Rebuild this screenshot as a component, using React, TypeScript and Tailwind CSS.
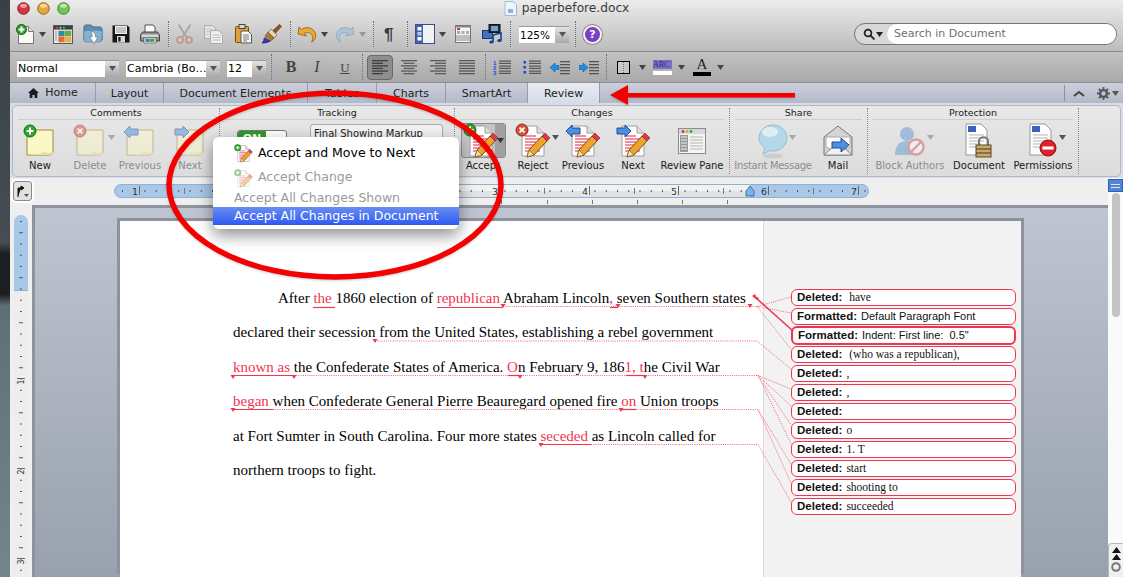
import type { ReactNode } from "react";

const RED = "#f0364f";

function Caret({ color = "#444" }: { color?: string }) {
  return (
    <svg width="7" height="5" viewBox="0 0 7 5" className="shrink-0">
      <path d="M0 0h7L3.5 5z" fill={color} />
    </svg>
  );
}

function Sep({ h = "h-[26px]" }: { h?: string }) {
  return <div className={`border-l border-dotted border-[#6f6f6f] ${h} shrink-0`} />;
}

function Light({ color, edge }: { color: string; edge: string }) {
  return (
    <svg width="13" height="13" viewBox="0 0 13 13">
      <circle cx="6.5" cy="6.5" r="5.8" fill={color} stroke={edge} />
      <ellipse cx="6.5" cy="3.8" rx="3.4" ry="2" fill="#fff" opacity="0.55" />
    </svg>
  );
}

function NewDocIcon() {
  return (
    <svg width="18" height="20" viewBox="0 0 18 20">
      <path d="M2.5 2.5h10l5 5v12h-15z" fill="#fbfbf4" stroke="#77776c" />
      <path d="M12.5 2.5v5h5" fill="#e4e4da" stroke="#77776c" />
      <circle cx="5.5" cy="5.5" r="5" fill="#2f9e2f" stroke="#0d5f0d" />
      <path d="M5.5 2.6v5.8M2.6 5.5h5.8" stroke="#fff" strokeWidth="2" />
    </svg>
  );
}

function GalleryIcon() {
  return (
    <svg width="20" height="19" viewBox="0 0 20 19">
      <rect x="0.5" y="0.5" width="19" height="18" fill="#dcd8cc" stroke="#55595f" />
      <rect x="1" y="1" width="18" height="3.5" fill="#3c4046" />
      <circle cx="4" cy="2.7" r="1" fill="#e44" />
      <circle cx="7.5" cy="2.7" r="1" fill="#ec4" />
      <circle cx="11" cy="2.7" r="1" fill="#4c4" />
      <rect x="1.5" y="5.5" width="3" height="12" fill="#fff" />
      <path d="M2 7h2M2 9h2M2 11h2M2 13h2M2 15h2" stroke="#777" />
      <rect x="5.5" y="6" width="6" height="5" fill="#2d8ea0" />
      <rect x="12" y="6" width="6" height="5" fill="#5fae4a" />
      <rect x="5.5" y="11.5" width="6" height="5.5" fill="#e86a30" />
      <rect x="12" y="11.5" width="6" height="5.5" fill="#eeb040" />
    </svg>
  );
}

function FolderIcon() {
  return (
    <svg width="20" height="20" viewBox="0 0 20 20">
      <path d="M1 3c0-1 1-2 2-2h5l2 2h7c1 0 2 1 2 2v11H1z" fill="#5d8fb0" stroke="#3f6c8c" />
      <path d="M.5 7c5-1 14-1 19 0l-1 10c-1 1-3 1-4 1H3c-1 0-2-1-2-1z" fill="#86b2d0" stroke="#4f7fa0" strokeWidth="0.6" />
      <path d="M8.5 7c3 1 4 3 4 6h2.5L11 19.5 6.5 13h2.6c0-2-.2-4-.6-6z" fill="#fff" stroke="#5a6a78" strokeWidth="0.6" />
    </svg>
  );
}

function SaveIcon() {
  return (
    <svg width="18" height="18" viewBox="0 0 18 18">
      <path d="M.5.5h15l2 2v15H.5z" fill="#161616" />
      <rect x="3" y="1" width="12" height="8" fill="#f0f0f0" />
      <path d="M4 3h10M4 5h10M4 7h10" stroke="#9a9a9a" />
      <rect x="5" y="11" width="8" height="6.5" fill="#d8d8d8" />
      <rect x="6.2" y="12" width="2.4" height="4.5" fill="#222" />
    </svg>
  );
}

function PrintIcon() {
  return (
    <svg width="20" height="20" viewBox="0 0 20 20">
      <path d="M5 1h8l2 2v6H5z" fill="#fafafa" stroke="#555" />
      <path d="M2.5 8h15l2 3v6H.5v-6z" fill="#8e8e8e" stroke="#454545" />
      <rect x="1.5" y="10.5" width="17" height="2.5" fill="#d6d6d6" />
      <path d="M4 14h12v5H4z" fill="#fff" stroke="#555" strokeWidth="0.7" />
      <rect x="5.5" y="15" width="4" height="3" fill="#2f7fc4" />
      <rect x="9.5" y="15" width="5" height="3" fill="#3fa85a" />
    </svg>
  );
}

function ScissorsIcon() {
  return (
    <svg width="17" height="20" viewBox="0 0 17 20" fill="none">
      <path d="M2.5 .5l8.5 13.5M14.5 .5L6 14" stroke="#a6a6a6" strokeWidth="1.8" />
      <circle cx="4" cy="16" r="3" stroke="#c98f82" strokeWidth="1.6" />
      <circle cx="13" cy="16" r="3" stroke="#c98f82" strokeWidth="1.6" />
    </svg>
  );
}

function CopyIcon() {
  return (
    <svg width="19" height="19" viewBox="0 0 19 19">
      <path d="M.5.5h8l3 3v10H.5z" fill="#e4e4e4" stroke="#ababab" />
      <path d="M2.5 4h6M2.5 6.5h6M2.5 9h3" stroke="#c4c4c4" />
      <path d="M6.5 5.5h8l4 4v9h-12z" fill="#efefef" stroke="#ababab" />
      <path d="M8.5 10h8M8.5 12.5h8M8.5 15h8" stroke="#bdbdbd" />
    </svg>
  );
}

function PasteIcon() {
  return (
    <svg width="17" height="20" viewBox="0 0 17 20">
      <rect x="0.5" y="2.5" width="13" height="16" rx="1" fill="#e0a03a" stroke="#6a4c14" />
      <rect x="4" y="0.5" width="6" height="4" fill="#d8d8d8" stroke="#444" />
      <path d="M6 7h7l3.5 3.5V19H6z" fill="#fafafa" stroke="#555" />
      <path d="M8 11h6M8 13h6M8 15h6M8 17h4" stroke="#777" />
    </svg>
  );
}

function BrushIcon() {
  return (
    <svg width="20" height="20" viewBox="0 0 20 20">
      <path d="M11 6.5L17.5 .5 19.5 2.5 13.5 9z" fill="#8a5a20" stroke="#3e2810" strokeWidth="0.6" />
      <path d="M9 5l6 6-3 3-6-6z" fill="#e2d6ac" stroke="#6a5a30" strokeWidth="0.6" />
      <path d="M6 8l6 6c-2 3-7 5-12 5 3-2 4-4 3-7z" fill="#a97a3a" stroke="#5a3e14" strokeWidth="0.5" />
      <path d="M2 14l6 3c-3 2-5 2-8 2 1-1 2-3 2-5z" fill="#3f2fd8" stroke="#201070" strokeWidth="0.5" />
    </svg>
  );
}

function UndoIcon({ faded }: { faded?: boolean }) {
  const c = faded ? "#aec4d6" : "#eeaa2c";
  const s = faded ? "#8ba3b8" : "#8a5a10";
  return (
    <svg width="20" height="17" viewBox="0 0 20 17" className={faded ? "-scale-x-100" : ""}>
      <path d="M1 8l1-7 2.5 2.5C7 1.500 11 1 14 2.500c4 2 5.500 6 4.500 9-.5 2-2 3.500-4 4.500 1.500-2 1.800-5 .5-7-1.500-2.500-5-3-8-1.500L9.500 10z" fill={c} stroke={s} strokeWidth="0.8" />
    </svg>
  );
}

function LayoutIcon() {
  return (
    <svg width="20" height="20" viewBox="0 0 20 20">
      <rect x="0.5" y="0.5" width="19" height="19" fill="#f2f2f2" stroke="#3b4f8c" />
      <rect x="1" y="1" width="7" height="18" fill="#3f62a8" />
      <rect x="2.500" y="3" width="4" height="3.500" fill="#fff" />
      <rect x="2.500" y="8" width="4" height="3.500" fill="#b8c8e8" />
      <rect x="2.500" y="13" width="4" height="3.500" fill="#fff" />
    </svg>
  );
}

function PageViewIcon() {
  return (
    <svg width="16" height="18" viewBox="0 0 16 18">
      <rect x="0.5" y="0.5" width="15" height="17" fill="#f5f5f5" stroke="#777" />
      <rect x="1" y="1" width="14" height="1.500" fill="#888" />
      <rect x="2" y="3" width="3" height="2" fill="#c83a30" />
      <rect x="2" y="6" width="3" height="3" fill="#aab" />
      <rect x="6.500" y="6" width="3" height="3" fill="#aab" />
      <rect x="11" y="6" width="3" height="3" fill="#aab" />
      <path d="M1 11h14M1 13h14M1 15h14" stroke="#888" />
    </svg>
  );
}

function MediaIcon() {
  return (
    <svg width="21" height="20" viewBox="0 0 21 20">
      <rect x="0.5" y="6.500" width="10" height="8" fill="#3f74c4" stroke="#183868" />
      <rect x="7" y="0.5" width="11" height="8" fill="#2b2b2b" stroke="#111" />
      <rect x="9" y="2" width="7" height="5" fill="#6fa0d8" />
      <path d="M11 18V11l8-2v7" fill="none" stroke="#16408c" strokeWidth="1.6" />
      <ellipse cx="9.500" cy="18" rx="2.200" ry="1.600" fill="#16408c" />
      <ellipse cx="17.500" cy="16.500" rx="2.200" ry="1.600" fill="#16408c" />
    </svg>
  );
}

function HelpIcon() {
  return (
    <div className="w-[19px] h-[19px] rounded-full bg-[#7a3fc4] border-2 border-[#f2f2f2] shadow-[0_0_0_1px_#8a8a8a] flex items-center justify-center text-white text-[11px] font-bold leading-none">
      ?
    </div>
  );
}

function SelectBox({ w, label, btn = "w-[14px]", size = "text-[11px]" }: { w: string; label: string; btn?: string; size?: string }) {
  return (
    <div className={`${w} h-[17px] flex bg-white shrink-0 border-t border-[#9a9a9a]`}>
      <div className={`flex-1 px-[1px] ${size} leading-[16px] text-black whitespace-nowrap overflow-hidden`}>{label}</div>
      <div className={`${btn} bg-gradient-to-b from-[#e4e4e4] to-[#a8a8a8] flex items-center justify-center`}>
        <Caret color="#555" />
      </div>
    </div>
  );
}

function AlignIcon({ kind }: { kind: "left" | "center" | "right" | "justify" }) {
  const rows = [16, 11, 16, 11, 16, 11];
  return (
    <svg width="16" height="15" viewBox="0 0 16 15">
      {rows.map((r, i) => {
        const w = kind === "justify" ? 16 : r;
        const x = kind === "left" || kind === "justify" ? 0 : kind === "right" ? 16 - w : (16 - w) / 2;
        return <rect key={i} x={x} y={i * 2.6} width={w} height="1.3" fill={kind === "left" ? "#3e3e3e" : "#5a5a5a"} />;
      })}
    </svg>
  );
}

function ListIcon({ numbered }: { numbered?: boolean }) {
  return (
    <svg width="18" height="15" viewBox="0 0 18 15">
      {[0, 5, 10].map((y, i) => (
        <g key={y}>
          {numbered ? (
            <text x="0" y={y + 5} fontSize="6" fontWeight="bold" fill="#1848e0" fontFamily="Liberation Sans, sans-serif">
              {i + 1}
            </text>
          ) : (
            <rect x="0.5" y={y + 1} width="2.500" height="2.500" fill="#1848e0" />
          )}
          <rect x="6" y={y + 0.5} width="12" height="1.200" fill="#555" />
          <rect x="6" y={y + 2.800} width="12" height="1.200" fill="#555" />
        </g>
      ))}
    </svg>
  );
}

function IndentIcon({ flip }: { flip?: boolean }) {
  return (
    <svg width="20" height="15" viewBox="0 0 20 15">
      <path
        d={flip ? "M0 7.5L5 3v2.500h4v4H5V12z" : "M9 7.5L4 3v2.500H0v4h4V12z"}
        fill="#1e8ee8"
        stroke="#0a4a90"
        strokeWidth="0.5"
      />
      {[1, 4, 7, 10, 13].map((y) => (
        <rect key={y} x="10" y={y} width="10" height="1.3" fill="#555" />
      ))}
    </svg>
  );
}

function HomeGlyph() {
  return (
    <svg width="11" height="10" viewBox="0 0 11 10" className="shrink-0">
      <path d="M5.500 0L11 5H9.300v5H6.600V7H4.400v3H1.700V5H0z" fill="#1c1c1c" />
    </svg>
  );
}

function GearGlyph() {
  return (
    <svg width="13" height="13" viewBox="0 0 13 13">
      <circle cx="6.500" cy="6.500" r="3.400" fill="none" stroke="#555" strokeWidth="2.400" />
      <path d="M6.500 0v2.500M6.500 10.500V13M0 6.500h2.500M10.500 6.500H13M1.900 1.900l1.800 1.800M9.300 9.300l1.800 1.800M1.900 11.100l1.800-1.800M9.300 3.700l1.800-1.800" stroke="#555" strokeWidth="1.800" />
    </svg>
  );
}

type Badge = "plus" | "x" | "left" | "right";

function BadgeMark({ kind }: { kind: Badge }) {
  if (kind === "plus" || kind === "x") {
    const fill = kind === "plus" ? "#2fa82f" : "#d9513a";
    const edge = kind === "plus" ? "#0f6a0f" : "#8c2a18";
    return (
      <g>
        <circle cx="7" cy="7" r="6" fill={fill} stroke={edge} />
        {kind === "plus" ? (
          <path d="M7 3.600v6.800M3.600 7h6.800" stroke="#fff" strokeWidth="2" />
        ) : (
          <path d="M4.600 4.600l4.800 4.800M9.400 4.600l-4.800 4.800" stroke="#fff" strokeWidth="1.800" />
        )}
      </g>
    );
  }
  return kind === "left" ? (
    <path d="M1 8l6-6v3h8v6H7v3z" fill="#4d8fe0" stroke="#1d4f94" />
  ) : (
    <path d="M16 8l-6-6v3H2v6h8v3z" fill="#4d8fe0" stroke="#1d4f94" />
  );
}

function StickyIcon({ badge, faded }: { badge: Badge; faded?: boolean }) {
  return (
    <svg width="34" height="34" viewBox="0 0 34 34" className={faded ? "opacity-50" : ""}>
      <path d="M4 6h26v22c0 1-2 3-4 3H4z" fill="#fbf8c8" stroke="#9c8a3c" />
      <path d="M4 31h22c2 0 4-2 4-3-3 1-6 1-9 0-4 2-12 2-17 3z" fill="#e8e0a0" />
      <BadgeMark kind={badge} />
    </svg>
  );
}

function ReviewIcon({ badge, size = 36 }: { badge?: Badge; size?: number }) {
  return (
    <svg width={size} height={size} viewBox="0 0 36 36">
      <path d="M7 3h15l7 7v23H7z" fill="#fdfdfd" stroke="#a0a0a0" />
      <path d="M22 3v7h7" fill="#dcdcdc" stroke="#a0a0a0" />
      {[13, 16, 19, 22, 25, 28].map((y) => (
        <path key={y} d={`M10 ${y}h${y % 2 ? 11 : 15}`} stroke="#e8546a" strokeWidth="1.3" />
      ))}
      <path d="M12 34l2-7 13-14 5 5-13 14z" fill="#eda32e" stroke="#7a5010" />
      <path d="M12 34l2-7 5 5z" fill="#f3dcb0" stroke="#7a5010" strokeWidth="0.6" />
      <path d="M27 13l3-3 5 5-3 3z" fill="#d93a4c" stroke="#80202c" strokeWidth="0.6" />
      {badge ? <BadgeMark kind={badge} /> : null}
    </svg>
  );
}

function ReviewPaneIcon() {
  return (
    <svg width="28" height="30" viewBox="0 0 28 30">
      <rect x="0.5" y="2.500" width="27" height="25" fill="#f4f4f0" stroke="#8c8c8c" />
      <rect x="1" y="3" width="26" height="5" fill="#d8d8d8" />
      <circle cx="5" cy="5.500" r="1.400" fill="#d33" />
      <circle cx="9" cy="5.500" r="1.400" fill="#da3" />
      <circle cx="13" cy="5.500" r="1.400" fill="#3a3" />
      <rect x="2" y="9" width="8" height="17" fill="#9a9a9a" />
      {[11, 14, 17, 20, 23].map((y) => (
        <g key={y}>
          <path d={`M3 ${y}h6`} stroke="#eee" />
          <path d={`M12 ${y}h13`} stroke="#b5b5b5" />
        </g>
      ))}
    </svg>
  );
}

function BubbleIcon() {
  return (
    <svg width="30" height="36" viewBox="0 0 30 36" className="opacity-80">
      <ellipse cx="15" cy="33" rx="10" ry="2.500" fill="#c8c8c8" />
      <path d="M15 2c8 0 14 6 14 13s-6 13-14 13c-2 0-3 0-4 0l-6 3 2-6C3 22 1 19 1 15 1 8 7 2 15 2z" fill="#a9d5ec" stroke="#7db4d0" />
      <ellipse cx="12" cy="9" rx="8" ry="5" fill="#dff1fa" />
    </svg>
  );
}

function MailIcon() {
  return (
    <svg width="30" height="32" viewBox="0 0 30 32">
      <path d="M1 12L15 1l14 11v18H1z" fill="#d4d4d4" stroke="#777" />
      <path d="M3 12h24v10L15 27 3 22z" fill="#fdfdfd" stroke="#aaa" />
      <path d="M1 30l11-10h6l11 10z" fill="#f2f2f2" stroke="#888" />
      <path d="M9 17h9v-4l8 7-8 7v-4H9z" fill="#4d8fe0" stroke="#1d4f94" />
    </svg>
  );
}

function BlockIcon() {
  return (
    <svg width="32" height="32" viewBox="0 0 32 32" className="opacity-65">
      <circle cx="13" cy="9" r="7" fill="#7fa8d4" />
      <path d="M1 30c0-10 5-14 12-14s12 4 12 14z" fill="#7fa8d4" />
      <circle cx="22" cy="22" r="7.500" fill="#f5f5f5" stroke="#d67b7b" strokeWidth="2.400" />
      <path d="M17 27l10-10" stroke="#d67b7b" strokeWidth="2.400" />
    </svg>
  );
}

function ProtectedDoc({ lock }: { lock?: boolean }) {
  return (
    <svg width="30" height="36" viewBox="0 0 30 36">
      <path d="M2 1h15l6 6v25H2z" fill="#fdfdfd" stroke="#999" />
      <rect x="4" y="3" width="8" height="6" fill="#3f5fc0" />
      <path d="M5 12h15M5 15h15M5 18h15M5 21h12M5 24h12" stroke="#b5b5b5" />
      {lock ? (
        <g>
          <path d="M15 22v-4c0-5 9-5 9 0v4" fill="none" stroke="#777" strokeWidth="2" />
          <rect x="12" y="22" width="15" height="12" fill="#c9a86a" stroke="#5a4a2a" />
          <path d="M12 26h15M12 30h15" stroke="#4a3a20" />
        </g>
      ) : (
        <g>
          <circle cx="20" cy="25" r="8" fill="#e0202c" stroke="#8c1018" />
          <rect x="14.500" y="23.500" width="11" height="3" fill="#fff" />
        </g>
      )}
    </svg>
  );
}

function RibbonBtn({ w, label, dim, children, caret, tight }: { w: string; label: string; dim?: boolean; children: ReactNode; caret?: boolean; tight?: boolean }) {
  return (
    <div className={`${w} flex flex-col items-center shrink-0`}>
      <div className="h-[37px] flex items-center justify-center relative">
        {children}
        {caret ? (
          <div className="absolute -right-[8px] top-[13px]">
            <Caret color={dim ? "#a8a8a8" : "#555"} />
          </div>
        ) : null}
      </div>
      <div className={`text-[10px] leading-[14px] whitespace-nowrap ${tight ? "tracking-[-0.3px]" : ""} ${dim ? "text-[#8c8c8c]" : "text-[#1a1a1a]"}`}>{label}</div>
    </div>
  );
}

function Section({ w, title, pad, children }: { w: string; title: string; pad: string; children: ReactNode }) {
  return (
    <div className={`${w} shrink-0 flex flex-col border-r border-dotted border-[#8a8a8a] my-[2px]`}>
      <div className="mx-[5px] h-[12px] border-b border-[#cfcfcf] text-center text-[9.5px] leading-[10px] text-[#222]">{title}</div>
      <div className={`flex ${pad} pt-[2px]`}>{children}</div>
    </div>
  );
}

function Ruler() {
  const xs: number[] = [];
  for (let x = 122; x < 866; x += 11.25) xs.push(x);
  const labels = [
    [139, "1"],
    [499, "3"],
    [589, "4"],
    [678, "5"],
    [768, "6"],
    [858, "7"],
  ] as const;
  return (
    <svg width="760" height="22" viewBox="112 182 760 22" className="ml-[102px] mt-[4px] block">
      <rect x="114.500" y="184.500" width="754" height="13" rx="6.500" fill="#a9c7e6" stroke="#8fb0d2" />
      <rect x="232" y="185" width="518" height="12" fill="#f2f2f2" />
      <rect x="232" y="191" width="518" height="6" fill="#e2e2e2" />
      {xs.map((x) => (
        <rect key={x} x={x} y={190} width="1" height="2" fill="#555" />
      ))}
      {[184, 274, 364, 454, 544, 634, 723, 813].map((x) => (
        <rect key={x} x={x} y={188} width="1" height="6" fill="#777" />
      ))}
      {labels.map(([x, t]) => (
        <g key={x}>
          <rect x={x} y={186} width="1" height="9" fill="#666" />
          <text x={x - 1} y={195} fontSize="9.5" textAnchor="end" fill="#333" fontFamily="DejaVu Sans, sans-serif" stroke={x > 750 || x < 232 ? "#a9c7e6" : "#eeeeee"} strokeWidth="2.500" paintOrder="stroke">
            {t}
          </text>
        </g>
      ))}
      {[501, 547, 592, 637, 682, 727].map((x) => (
        <rect key={x} x={x} y={200} width="1" height="4" fill="#777" />
      ))}
      <path d="M750 186l4 5v5h-8v-5z" fill="#7fb4e8" stroke="#2a5c98" strokeWidth="0.8" />
    </svg>
  );
}

function VRuler() {
  const ys: number[] = [];
  for (let y = 221; y < 577; y += 11.25) ys.push(y);
  return (
    <svg width="14" height="362" viewBox="14 215 14 362" className="block">
      <rect x="14" y="215" width="14" height="362" fill="#ededed" />
      <path d="M14 290v-68a7 7 0 0 1 14 0v68z" fill="#a9c7e6" />
      <rect x="14" y="290" width="14" height="1" fill="#8fb0d2" />
      {ys.map((y, i) => (
        <rect key={y} x={i % 4 === 1 ? 19 : 20} y={y} width={i % 4 === 1 ? 4 : 2} height="1" fill="#555" />
      ))}
      {[378, 468, 558].map((y, i) => (
        <g key={y}>
          <rect x="17" y={y} width="8" height="1" fill="#666" />
          <text x="21" y={y + 7} fontSize="8" textAnchor="middle" fill="#333" fontFamily="DejaVu Sans, sans-serif" transform={`rotate(-90 21 ${y + 4})`}>
            {i + 1}
          </text>
        </g>
      ))}
    </svg>
  );
}

const lines: { pad?: string; parts: (string | [string])[] }[] = [
  { parts: ["After ", ["the "], "1860 election of ", ["republican "], "Abraham Lincoln", [", "], "seven Southern states"] },
  { parts: ["declared their secession from the United States, establishing a rebel government"] },
  { parts: [["known as "], "the Confederate States of America. ", ["O"], "n February 9, 186", ["1, t"], "he Civil War"] },
  { parts: [["began "], "when Confederate General Pierre Beauregard opened fire ", ["on "], "Union troops"] },
  { parts: ["at Fort Sumter in South Carolina. Four more states ", ["seceded "], "as Lincoln called for"] },
  { parts: ["northern troops to fight."] },
];

const comments: { head: string; text: string; serif?: boolean; thick?: boolean }[] = [
  { head: "Deleted:", text: "\u00a0have", serif: true },
  { head: "Formatted:", text: "Default Paragraph Font" },
  { head: "Formatted:", text: 'Indent: First line:  0.5"', thick: true },
  { head: "Deleted:", text: "\u00a0(who was a republican),", serif: true },
  { head: "Deleted:", text: ",", serif: true },
  { head: "Deleted:", text: ",", serif: true },
  { head: "Deleted:", text: "" },
  { head: "Deleted:", text: "o", serif: true },
  { head: "Deleted:", text: "1. T", serif: true },
  { head: "Deleted:", text: "start", serif: true },
  { head: "Deleted:", text: "shooting to", serif: true },
  { head: "Deleted:", text: "succeeded", serif: true },
];

function Markup() {
  const solid: [number, number, number][] = [
    [313, 335, 307.5],
    [437, 503, 307.5],
    [610, 618, 307.5],
    [233, 294, 375.5],
    [508, 520, 375.5],
    [626, 645, 375.5],
    [233, 273, 409.5],
    [621, 636, 409.5],
    [539, 591, 444.5],
  ];
  const dotted: string[] = [
    "M503 306.5H757L791 297",
    "M757 306.5L791 313",
    "M757 306.5L791 349",
    "M375 341H757L791 369",
    "M294 375.5H758L791 389",
    "M758 375.5L791 406",
    "M758 375.5L791 425",
    "M758 375.5L791 444",
    "M273 409.5H758L791 464",
    "M758 409.5L791 483",
    "M591 444.5H758L791 502",
  ];
  const marks: [number, number][] = [
    [503, 304],
    [618, 304],
    [750, 304],
    [375, 339],
    [233, 375],
    [294, 375],
    [520, 375],
    [645, 375],
    [233, 408],
    [621, 408],
    [541, 443],
  ];
  return (
    <svg className="absolute top-0 left-0 pointer-events-none" width="901" height="356" viewBox="120 221 901 356">
      {solid.map(([a, b, y]) => (
        <path key={a} d={`M${a} ${y}H${b}`} stroke={RED} strokeWidth="1.2" />
      ))}
      {dotted.map((d) => (
        <path key={d} d={d} fill="none" stroke={RED} strokeWidth="0.9" strokeDasharray="1 1.2" opacity="0.85" />
      ))}
      {marks.map(([x, y]) => (
        <path key={x + "-" + y} d={`M${x - 2.5} ${y}h5l-2.5 4z`} fill={RED} />
      ))}
      <path d="M752 296l3-2 1.500 3 3 1-3 1.500z" fill={RED} />
      <path d="M755 297L793 331" stroke={RED} strokeWidth="1.6" />
    </svg>
  );
}

function Page() {
  return (
    <div className="relative w-[901px] flex-1 flex bg-white overflow-hidden shadow-[-3px_-3px_0_#8d929c,3px_-3px_0_#8d929c]">
      <div className="w-[643px] shrink-0 pt-[60px] font-['Liberation_Serif',serif] text-[15px] leading-[34.4px] text-black">
        {lines.map((l, i) => (
          <p key={i} className="pl-[113px] whitespace-pre">
            <span className={i === 0 ? "ml-[45px]" : ""}>
              {l.parts.map((p, j) =>
                typeof p === "string" ? (
                  <span key={j}>{p}</span>
                ) : (
                  <span key={j} className="text-[#f0364f]">
                    {p[0]}
                  </span>
                ),
              )}
            </span>
          </p>
        ))}
      </div>
      <div className="flex-1 bg-[#f2f2f2] border-l border-[#dcdcdc] pl-[27px] pr-[5px] pt-[68px] flex flex-col gap-[2px]">
        {comments.map((c, i) => (
          <div
            key={i}
            className={`rounded-[6px] bg-white px-[5px] flex items-center whitespace-pre text-[#111] text-[11.5px] font-['Liberation_Sans',sans-serif] ${
              c.thick ? "border-2 border-[#f0364f] -my-[1px] h-[19px]" : "border border-[#f0364f] h-[17px]"
            }`}
          >
            <b>{c.head}</b>
            <span className={c.serif ? "font-['Liberation_Serif',serif] ml-[4px] text-[11.5px]" : "ml-[4px] text-[11px]"}>{c.text}</span>
          </div>
        ))}
      </div>
      <Markup />
    </div>
  );
}

function AcceptMenu() {
  return (
    <div className="absolute left-[213px] top-[137px] w-[246px] h-[92px] bg-white rounded-[6px] shadow-[0_6px_16px_rgba(0,0,0,0.45)] text-[12.5px] whitespace-nowrap flex flex-col">
      <div className="h-[29px] pl-[21px] pt-[3px] flex items-center gap-[6px] text-black">
        <div className="w-[18px] h-[18px]">
          <ReviewIcon badge="plus" size={19} />
        </div>
        Accept and Move to Next
      </div>
      <div className="h-[23px] pl-[21px] flex items-center gap-[6px] text-[#9a9a9a]">
        <div className="w-[18px] h-[18px] opacity-50">
          <ReviewIcon badge="plus" size={19} />
        </div>
        Accept Change
      </div>
      <div className="h-[18px] pl-[21px] flex items-center text-[#9a9a9a]">Accept All Changes Shown</div>
      <div className="h-[18px] pl-[21px] flex items-center text-white bg-gradient-to-b from-[#6a8cf0] to-[#2f58f5]">Accept All Changes in Document</div>
    </div>
  );
}

function Annotations() {
  return (
    <svg className="absolute top-0 left-0 pointer-events-none drop-shadow-[0_1px_1px_rgba(0,0,0,0.2)]" width="1123" height="577" viewBox="0 0 1123 577">
      <ellipse cx="335" cy="185" rx="166" ry="92" fill="none" stroke="#f40000" strokeWidth="5.5" />
      <path d="M610 95L628 85V93H795V97.5H628V105z" fill="#f40000" />
    </svg>
  );
}

export default function App() {
  return (
    <div className="relative w-[1123px] h-[577px] overflow-hidden flex font-['DejaVu_Sans',sans-serif] bg-[#3a4046]">
      <div className="w-[10px] shrink-0 bg-[linear-gradient(180deg,#3a4046_0%,#454d52_42%,#1c1f22_44%,#1c1f22_51%,#5f6f77_53%,#74858c_100%)]" />
      <div className="flex-1 flex flex-col min-w-0">
        {/* title + toolbar */}
        <div className="h-[51px] shrink-0 bg-gradient-to-b from-[#ececec] to-[#bcbcbc]">
          <div className="h-[17px] grid grid-cols-[1fr_auto_1fr] items-center">
            <div className="flex gap-[7px] pl-[7px]">
              <Light color="#d8343c" edge="#8c2028" />
              <Light color="#e8a63a" edge="#96661a" />
              <Light color="#74c455" edge="#3f8a2c" />
            </div>
            <div className="flex items-center gap-[5px] text-[12.2px] leading-none text-[#3a3a3a]">
              <svg width="13" height="15" viewBox="0 0 13 15">
                <path d="M1 .5h8l3.500 3.500v10.500H1z" fill="#eef4fb" stroke="#a8b8cc" />
                <path d="M4 8h5v4H4z" fill="#8fb0d8" />
              </svg>
              paperbefore.docx
            </div>
            <div />
          </div>
          <div className="h-[34px] flex items-center">
            <div className="ml-[6px]"><NewDocIcon /></div>
            <div className="ml-[5px]"><Caret /></div>
            <div className="ml-[7px]"><GalleryIcon /></div>
            <div className="ml-[10px]"><FolderIcon /></div>
            <div className="ml-[9px]"><SaveIcon /></div>
            <div className="ml-[10px]"><PrintIcon /></div>
            <div className="ml-[8px]"><Sep /></div>
            <div className="ml-[7px]"><ScissorsIcon /></div>
            <div className="ml-[11px]"><CopyIcon /></div>
            <div className="ml-[12px]"><PasteIcon /></div>
            <div className="ml-[10px]"><BrushIcon /></div>
            <div className="ml-[8px]"><Sep /></div>
            <div className="ml-[6px]"><UndoIcon /></div>
            <div className="ml-[4px]"><Caret /></div>
            <div className="ml-[7px]"><UndoIcon faded /></div>
            <div className="ml-[4px]"><Caret color="#999" /></div>
            <div className="ml-[7px]"><Sep /></div>
            <div className="ml-[10px] w-[13px] font-['Liberation_Sans',sans-serif] font-bold text-[17px] leading-none text-[#3a3a3a]">¶</div>
            <div className="ml-[10px]"><Sep /></div>
            <div className="ml-[7px]"><LayoutIcon /></div>
            <div className="ml-[4px]"><Caret /></div>
            <div className="ml-[9px]"><PageViewIcon /></div>
            <div className="ml-[11px]"><MediaIcon /></div>
            <div className="ml-[7px]"><Sep /></div>
            <div className="ml-[8px]"><SelectBox w="w-[50px]" label="125%" size="text-[10.5px]" /></div>
            <div className="ml-[6px]"><Sep /></div>
            <div className="ml-[7px]"><HelpIcon /></div>
            <div className="ml-[252px] w-[263px] h-[22px] rounded-full border border-[#777] bg-[#d8d8d8] flex items-center">
              <div className="w-[32px] flex items-center justify-center gap-[1px] pl-[3px] shrink-0">
                <svg width="12" height="12" viewBox="0 0 12 12" fill="none" stroke="#222" strokeWidth="1.800">
                  <circle cx="5" cy="5" r="3.400" />
                  <path d="M7.500 7.500L11.500 11.500" />
                </svg>
                <Caret color="#222" />
              </div>
              <div className="flex-1 h-full rounded-full bg-white pl-[7px] text-[11px] leading-[20px] text-[#6f6f6f]">Search in Document</div>
            </div>
          </div>
        </div>

        {/* format bar */}
        <div className="h-[31px] shrink-0 border-t border-[#8f8f8f] bg-gradient-to-b from-[#c2c2c2] to-[#a9a9a9] flex items-center">
          <div className="ml-[7px] translate-y-[1px]"><SelectBox w="w-[102px]" label="Normal" /></div>
          <div className="ml-[7px] translate-y-[1px]"><SelectBox w="w-[94px]" label="Cambria (Bo…" /></div>
          <div className="ml-[7px] translate-y-[1px]"><SelectBox w="w-[39px]" label="12" /></div>
          <div className="ml-[5px]"><Sep /></div>
          <div className="ml-[12px] w-[14px] text-center font-['Liberation_Serif',serif] font-bold text-[16px] leading-none text-[#444]">B</div>
          <div className="ml-[14px] w-[10px] text-center font-['Liberation_Serif',serif] italic text-[16px] leading-none text-[#444]">I</div>
          <div className="ml-[17px] w-[12px] text-center font-['Liberation_Serif',serif] underline text-[13px] leading-none text-[#444]">U</div>
          <div className="ml-[11px]"><Sep /></div>
          <div className="ml-[4px] w-[26px] h-[25px] rounded-[4px] bg-[#8e8e8e] border border-[#6a6a6a] flex items-center justify-center"><AlignIcon kind="left" /></div>
          <div className="ml-[8px]"><AlignIcon kind="center" /></div>
          <div className="ml-[13px]"><AlignIcon kind="right" /></div>
          <div className="ml-[13px]"><AlignIcon kind="justify" /></div>
          <div className="ml-[10px]"><Sep /></div>
          <div className="ml-[7px]"><ListIcon numbered /></div>
          <div className="ml-[12px]"><ListIcon /></div>
          <div className="ml-[9px]"><IndentIcon flip /></div>
          <div className="ml-[9px]"><IndentIcon /></div>
          <div className="ml-[7px]"><Sep /></div>
          <div className="ml-[10px] w-[13px] h-[13px] border border-black bg-[#c8c8c8] flex items-center justify-center">
            <div className="w-[1px] h-full border-l border-dotted border-[#777]" />
          </div>
          <div className="ml-[9px]"><Caret /></div>
          <div className="ml-[7px] w-[19px] flex flex-col">
            <div className="h-[9px] bg-[#7a70c8] text-[8px] leading-[9px] font-['Liberation_Serif',serif] text-[#2a2a70] overflow-hidden">ABC</div>
            <div className="h-[4px] bg-white mt-[2px]" />
          </div>
          <div className="ml-[6px]"><Caret /></div>
          <div className="ml-[8px] w-[18px] flex flex-col items-center">
            <div className="font-['Liberation_Serif',serif] text-[15px] leading-[13px] text-[#222]">A</div>
            <div className="h-[4px] w-full bg-black mt-[1px]" />
          </div>
          <div className="ml-[6px]"><Caret /></div>
        </div>

        {/* tabs */}
        <div className="h-[21px] shrink-0 border-t border-[#8f8f8f] bg-gradient-to-b from-[#ccd0dc] to-[#b4b9c8] flex pl-[1px] text-[11px] leading-[22px] text-[#222]">
          <div className="w-[85px] flex items-center justify-center gap-[6px] border-r border-[#979cab]"><HomeGlyph />Home</div>
          <div className="w-[68px] text-center border-r border-[#979cab]">Layout</div>
          <div className="w-[144px] text-center border-r border-[#979cab]">Document Elements</div>
          <div className="w-[69px] text-center border-r border-[#979cab]">Tables</div>
          <div className="w-[69px] text-center border-r border-[#979cab]">Charts</div>
          <div className="w-[82px] text-center border-r border-[#979cab]">SmartArt</div>
          <div className="w-[72px] text-center bg-gradient-to-b from-[#e8ebf2] to-[#d8dce6] border-r border-[#979cab]">Review</div>
          <div className="ml-[464px] my-[2px] border-l border-[#8e92a0]" />
          <div className="ml-[8px] flex items-center">
            <svg width="12" height="7" viewBox="0 0 12 7" fill="none" stroke="#444" strokeWidth="2"><path d="M1 6l5-4 5 4" /></svg>
          </div>
          <div className="ml-[12px] flex items-center gap-[2px]"><GearGlyph /><Caret color="#555" /></div>
        </div>

        {/* ribbon */}
        <div className="h-[75px] shrink-0 bg-[#d8dce6] pt-[2px] pl-[2px] pr-[2px] pb-[1px]">
          <div className="h-full rounded-[5px] border border-[#b3b8c6] bg-gradient-to-b from-[#e8e8e8] to-[#dcdcdc] flex">
            <Section w="w-[207px]" title="Comments" pad="pl-[2px]">
              <RibbonBtn w="w-[50px]" label="New"><StickyIcon badge="plus" /></RibbonBtn>
              <RibbonBtn w="w-[50px]" label="Delete" dim caret><StickyIcon badge="x" faded /></RibbonBtn>
              <RibbonBtn w="w-[50px]" label="Previous" dim><StickyIcon badge="left" faded /></RibbonBtn>
              <RibbonBtn w="w-[50px]" label="Next" dim><StickyIcon badge="right" faded /></RibbonBtn>
            </Section>
            <Section w="w-[235px]" title="Tracking" pad="pl-[17px]">
              <div className="w-[50px] h-[17px] mt-[8px] rounded-[3px] border border-[#777] bg-white flex overflow-hidden shrink-0">
                <div className="w-[28px] bg-[#2f9a2f] text-white text-[11px] leading-[15px] text-center font-bold">ON</div>
              </div>
              <div className="w-[133px] h-[20px] ml-[23px] mt-[2px] rounded-[3px] border border-[#aaa] bg-[#f2f2f2] text-[10px] leading-[18px] pl-[3px] text-[#222] whitespace-nowrap shrink-0">Final Showing Markup</div>
            </Section>
            <Section w="w-[275px]" title="Changes" pad="pl-[3px]">
              <div className="relative w-[50px] shrink-0 flex flex-col items-center">
                <div className="absolute left-[3px] top-[1px] w-[45px] h-[35px] rounded-[3px] border border-[#8c8c8c] bg-[#c4c4c4] flex justify-end">
                  <div className="w-[10px] h-full bg-[#a0a0a0] flex items-center justify-center"><Caret color="#333" /></div>
                </div>
                <div className="h-[37px] flex items-center justify-center relative -ml-[5px]"><ReviewIcon badge="plus" /></div>
                <div className="text-[10px] leading-[14px] text-[#1a1a1a] relative">Accept</div>
              </div>
              <RibbonBtn w="w-[50px]" label="Reject" caret><ReviewIcon badge="x" /></RibbonBtn>
              <RibbonBtn w="w-[50px]" label="Previous"><ReviewIcon badge="left" /></RibbonBtn>
              <RibbonBtn w="w-[50px]" label="Next"><ReviewIcon badge="right" /></RibbonBtn>
              <RibbonBtn w="w-[68px]" label="Review Pane"><ReviewPaneIcon /></RibbonBtn>
            </Section>
            <Section w="w-[138px]" title="Share" pad="pl-[8px]">
              <RibbonBtn w="w-[70px]" label="Instant Message" dim caret tight><BubbleIcon /></RibbonBtn>
              <RibbonBtn w="w-[60px]" label="Mail"><MailIcon /></RibbonBtn>
            </Section>
            <Section w="w-[211px]" title="Protection" pad="pl-[7px]">
              <RibbonBtn w="w-[70px]" label="Block Authors" dim caret><BlockIcon /></RibbonBtn>
              <RibbonBtn w="w-[68px]" label="Document"><ProtectedDoc lock /></RibbonBtn>
              <RibbonBtn w="w-[60px]" label="Permissions" caret><ProtectedDoc /></RibbonBtn>
            </Section>
          </div>
        </div>

        {/* ruler + document */}
        <div className="flex-1 flex min-h-0">
          <div className="flex-1 flex flex-col min-w-0">
            <div className="h-[27px] shrink-0 bg-[#efefef] relative">
              <div className="absolute left-[3px] top-[3px] w-[19px] h-[20px] rounded-[3px] bg-[#e2e2e2] border border-[#8a8a8a] shadow-[0_0_0_2px_#fff] flex items-center justify-center">
                <svg width="13" height="13" viewBox="0 0 13 13">
                  <path d="M2 12V3h3M5 1v4l3-2z" fill="#111" stroke="#111" />
                  <path d="M8 9h5l-2.500 3z" fill="#555" />
                </svg>
              </div>
              <Ruler />
            </div>
            <div className="flex-1 flex min-h-0">
              <div className="w-[22px] shrink-0 bg-[#efefef] pl-[4px] pt-[10px]"><VRuler /></div>
              <div className="flex-1 flex flex-col pl-[85px] pt-[13px] border-t-[3px] border-l-[3px] border-[#8e939d] bg-gradient-to-b from-[#bfc5d0] to-[#98a1ad] min-w-0">
                <Page />
              </div>
            </div>
          </div>
          <div className="w-[15px] shrink-0 bg-[#fafafa] flex flex-col relative">
            <div className="h-[13px] mt-[1px] bg-[#4f86d8] border border-[#2f60b0] flex flex-col justify-center gap-[2px] px-[2px]">
              <div className="h-[1px] bg-[#d8e6f8]" />
              <div className="h-[1px] bg-[#d8e6f8]" />
            </div>
            <div className="mt-[1px] ml-[4px] w-[8px] h-[124px] rounded-full bg-[#c4c4c4]" />
            <div className="flex-1" />
            <div className="h-[34px] rounded-tl-[4px] border-t border-l border-[#b8b8b8] bg-[#f0f0f0] flex flex-col items-center pt-[3px] gap-[2px]">
              <svg width="9" height="13" viewBox="0 0 9 13"><path d="M4.500 0L9 6H0zM4.500 7L9 13H0z" fill="#111" /></svg>
              <svg width="10" height="10" viewBox="0 0 10 10" fill="none" stroke="#777" strokeWidth="2"><circle cx="5" cy="5" r="3.800" /></svg>
            </div>
          </div>
        </div>
      </div>
      <AcceptMenu />
      <Annotations />
    </div>
  );
}
